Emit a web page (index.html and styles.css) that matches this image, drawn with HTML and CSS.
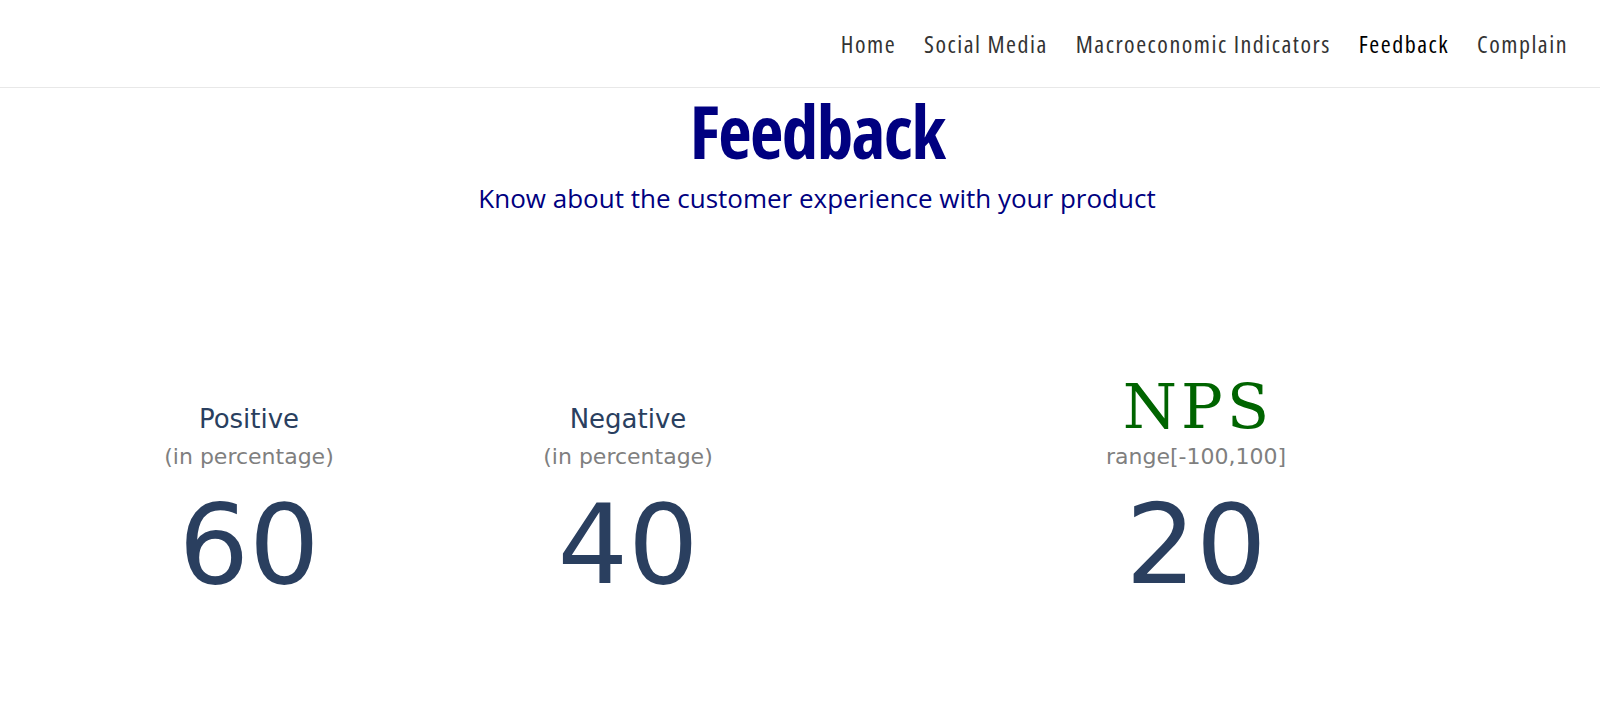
FILE: index.html
```html
<!DOCTYPE html>
<html lang="en">
<head>
<meta charset="utf-8">
<title>Feedback</title>
<link rel="stylesheet" href="styles.css">
</head>
<body>
<header class="topbar">
  <nav class="nav">
    <a class="nav-link" href="#">Home</a>
    <a class="nav-link" href="#">Social Media</a>
    <a class="nav-link" href="#">Macroeconomic Indicators</a>
    <a class="nav-link active" href="#">Feedback</a>
    <a class="nav-link" href="#">Complain</a>
  </nav>
</header>
<main class="content">
  <section class="hero">
    <h1 class="hero-title">Feedback</h1>
    <p class="hero-sub">Know about the customer experience with your product</p>
  </section>
  <section class="indicators">
    <div class="ind-title ind-c1">Positive</div>
    <div class="ind-title ind-c2">Negative</div>
    <div class="ind-title nps ind-c3">NPS</div>
    <div class="ind-sub ind-c1">(in percentage)</div>
    <div class="ind-sub ind-c2">(in percentage)</div>
    <div class="ind-sub ind-c3">range[-100,100]</div>
    <div class="ind-value ind-c1">60</div>
    <div class="ind-value ind-c2">40</div>
    <div class="ind-value ind-c3">20</div>
  </section>
</main>
</body>
</html>
```
FILE: styles.css
```css
html, body {
  margin: 0;
  padding: 0;
  background: #ffffff;
}

body {
  font-family: "Liberation Sans", Arial, sans-serif;
}

.topbar {
  height: 87px;
  border-bottom: 1px solid #e8e8e8;
  display: flex;
  justify-content: flex-end;
  align-items: center;
  padding-right: 32px;
}

.nav {
  display: flex;
  gap: 28px;
  align-items: baseline;
}

.nav-link {
  font-family: "Open Sans", sans-serif;
  font-stretch: 75%;
  font-size: 24px;
  letter-spacing: 1.5px;
  color: #333333;
  text-decoration: none;
}

.nav-link.active {
  color: #000000;
}

.hero {
  text-align: center;
  padding-left: 34px;
}

.hero-title {
  margin: 8px 0 0;
  font-family: "Open Sans", sans-serif;
  font-stretch: 75%;
  font-weight: 700;
  font-size: 73px;
  line-height: 70px;
  letter-spacing: -1.6px;
  color: #000080;
}

.hero-sub {
  margin: 16px 0 0;
  font-family: "Open Sans", "Noto Sans", sans-serif;
  font-size: 26px;
  line-height: 32px;
  color: #000080;
}

.indicators {
  display: grid;
  grid-template-columns: 378px 380px 756px;
  padding-left: 60px;
  margin-top: 150px;
  align-items: baseline;
  justify-items: center;
  font-family: "DejaVu Sans", Verdana, sans-serif;
}

.ind-c1 { grid-column: 1; }
.ind-c2 { grid-column: 2; }
.ind-c3 { grid-column: 3; }

.ind-title {
  grid-row: 1;
  padding-top: 40px;
  font-size: 26px;
  line-height: 30px;
  color: #2a3f5f;
}

.ind-title.nps {
  padding-top: 0;
  font-family: "DejaVu Serif", "Liberation Serif", serif;
  font-size: 62px;
  line-height: 30px;
  letter-spacing: 4px;
  margin-right: -4px;
  color: #006400;
}

.ind-sub {
  grid-row: 2;
  font-size: 22px;
  line-height: 46px;
  color: #7f7f7f;
}

.ind-value {
  grid-row: 3;
  font-size: 111px;
  line-height: 130px;
  color: #2a3f5f;
}
```
